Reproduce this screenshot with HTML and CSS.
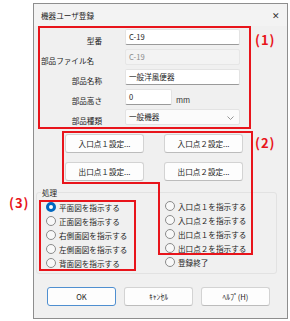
FILE: index.html
```html
<!DOCTYPE html>
<html lang="ja">
<head>
    <meta charset="UTF-8">
    <title>機器ユーザ登録</title>
    <link rel="stylesheet" href="styles.css">
</head>
<body>
<div class="page">
    <div class="dialog">
        <div class="titlebar">
            <span class="title">機器ユーザ登録</span>
            <span class="close">✕</span>
        </div>

        <!-- (1) part info -->
        <div class="mark mark-info">
            <div class="row">
                <label class="field-label">型番</label>
                <div class="input">C-19</div>
            </div>
            <div class="row">
                <label class="field-label left">部品ファイル名</label>
                <div class="input disabled">C-19</div>
            </div>
            <div class="row row-gap">
                <label class="field-label">部品名称</label>
                <div class="input">一般洋風便器</div>
            </div>
            <div class="row">
                <label class="field-label">部品高さ</label>
                <div class="input short">0</div>
                <span class="unit">mm</span>
            </div>
            <div class="row">
                <label class="field-label">部品種類</label>
                <div class="input combo">一般機器
                    <svg class="chev" width="7" height="4" viewBox="0 0 7 4"><path d="M0.5 0.5 L3.5 3.5 L6.5 0.5" fill="none" stroke="#8a8a8a" stroke-width="0.9"/></svg>
                </div>
            </div>
        </div>

        <!-- (2) point buttons -->
        <div class="point-buttons">
            <button class="btn">入口点１設定...</button>
            <button class="btn">入口点２設定...</button>
            <button class="btn">出口点１設定...</button>
            <button class="btn">出口点２設定...</button>
        </div>

        <fieldset class="group">
            <legend>処理</legend>
            <div class="group-body">
                <div class="mark mark-views">
                    <ul class="radios">
                        <li><span class="radio on"></span>平面図を指示する</li>
                        <li><span class="radio"></span>正面図を指示する</li>
                        <li><span class="radio"></span>右側面図を指示する</li>
                        <li><span class="radio"></span>左側面図を指示する</li>
                        <li><span class="radio"></span>背面図を指示する</li>
                    </ul>
                </div>
                <ul class="radios points">
                    <li><span class="radio"></span>入口点１を指示する</li>
                    <li><span class="radio"></span>入口点２を指示する</li>
                    <li><span class="radio"></span>出口点１を指示する</li>
                    <li><span class="radio"></span>出口点２を指示する</li>
                    <li><span class="radio"></span>登録終了</li>
                </ul>
            </div>
        </fieldset>

        <div class="footer">
            <button class="btn default">OK</button>
            <button class="btn">ｷｬﾝｾﾙ</button>
            <button class="btn">ﾍﾙﾌﾟ(H)</button>
        </div>
    </div>

    <!-- annotations -->
    <svg class="outline" width="290" height="321" viewBox="0 0 290 321">
        <polygon points="63,132 252,132 252,254 159,254 159,183 63,183" fill="none" stroke="#e8141b" stroke-width="2"/>
    </svg>
    <span class="callout c1">(1)</span>
    <span class="callout c2">(2)</span>
    <span class="callout c3">(3)</span>
</div>
</body>
</html>
```

FILE: styles.css
```css
/* dialog screenshot */
body {
    margin: 0;
    background: #fff;
    font-family: "Noto Sans CJK JP", "Noto Sans", sans-serif;
    font-size: 7.6px;
    color: #1b1b1b;
}
.page {
    position: relative;
    width: 290px;
    height: 321px;
    padding: 3px 0 0 33px;
    box-sizing: border-box;
}
.dialog {
    width: 255px;
    height: 316px;
    border: 1px solid #8e8e8e;
    background: #f0f0f0;
    box-sizing: border-box;
}
.titlebar {
    height: 22px;
    display: flex;
    align-items: center;
    justify-content: space-between;
    padding: 0 7px;
    background: #f3f3f3;
}
.close {
    font-size: 9px;
    color: #333;
}

.mark {
    border: 2px solid #e8141b;
    box-sizing: border-box;
}
.mark-info {
    width: 213px;
    margin-left: 4px;
    padding: 1px 0 0;
    height: 103px;
}
.row {
    display: flex;
    align-items: center;
    height: 16px;
    margin-bottom: 4px;
}
.row-gap {
    margin-top: 2px;
}
.field-label {
    width: 62px;
    margin-right: 23px;
    text-align: right;
    padding-top: 6px;
}
.field-label.left {
    text-align: left;
    padding-left: 1px;
    box-sizing: border-box;
}
.input {
    width: 115px;
    height: 16px;
    box-sizing: border-box;
    background: #fff;
    border: 1px solid #e3e3e3;
    border-bottom-color: #9a9a9a;
    border-radius: 2px;
    padding: 0 3px;
    line-height: 14px;
    position: relative;
}
.input.disabled {
    background: #f3f3f3;
    border-color: #e6e6e6;
    color: #8a8a8a;
}
.input.short {
    width: 47px;
}
.input.combo {
    background: #fbfbfb;
    border-bottom-color: #e3e3e3;
}
.chev {
    position: absolute;
    right: 5px;
    top: 6px;
}
.unit {
    margin-left: 4px;
    padding-top: 4px;
    color: #333;
}

.btn {
    height: 19px;
    box-sizing: border-box;
    background: #fdfdfd;
    border: 1px solid #d3d3d3;
    border-bottom-color: #bcbcbc;
    border-radius: 3px;
    font-family: inherit;
    font-size: 7.6px;
    color: #1b1b1b;
    padding: 0;
}
.btn.default {
    border-color: #4f8fd0;
}
.point-buttons {
    display: grid;
    grid-template-columns: 79px 79px;
    column-gap: 20px;
    row-gap: 9px;
    margin: 5px 0 0 31px;
}

.group {
    width: 241px;
    margin: 6px 0 0 2px;
    padding: 0 0 1px 1px;
    border: 1px solid #e2e2e2;
    border-radius: 3px;
    box-sizing: border-box;
    height: 87px;
}
.group legend {
    margin-left: 3px;
    padding: 0 1px;
    line-height: 11px;
}
.group-body {
    display: flex;
    column-gap: 29px;
    margin-top: 2px;
}
.mark-views {
    width: 97px;
    height: 71px;
    margin-left: 1px;
}
.radios {
    list-style: none;
    margin: -2px 0 0;
    padding: 0 0 0 5px;
}
.radios li {
    display: flex;
    align-items: center;
    height: 14px;
}
.radios.points {
    margin-top: -1px;
    padding-left: 0;
}
.radio {
    width: 10px;
    height: 10px;
    box-sizing: border-box;
    border: 1px solid #8b8b8b;
    border-radius: 50%;
    background: #f8f8f8;
    margin-right: 3px;
}
.radio.on {
    border: 3px solid #0067c0;
    background: #fff;
}

.footer {
    display: flex;
    column-gap: 8px;
    margin: 13px 0 0 13px;
}
.footer .btn {
    width: 69px;
}

.outline {
    position: absolute;
    left: 0;
    top: 0;
    pointer-events: none;
}
.callout {
    position: absolute;
    color: #e8141b;
    font-weight: bold;
    font-size: 13px;
    letter-spacing: 1px;
    line-height: 14px;
}
.c1 { left: 255px; top: 33px; }
.c2 { left: 255px; top: 136px; }
.c3 { left: 9px; top: 196px; }
```
